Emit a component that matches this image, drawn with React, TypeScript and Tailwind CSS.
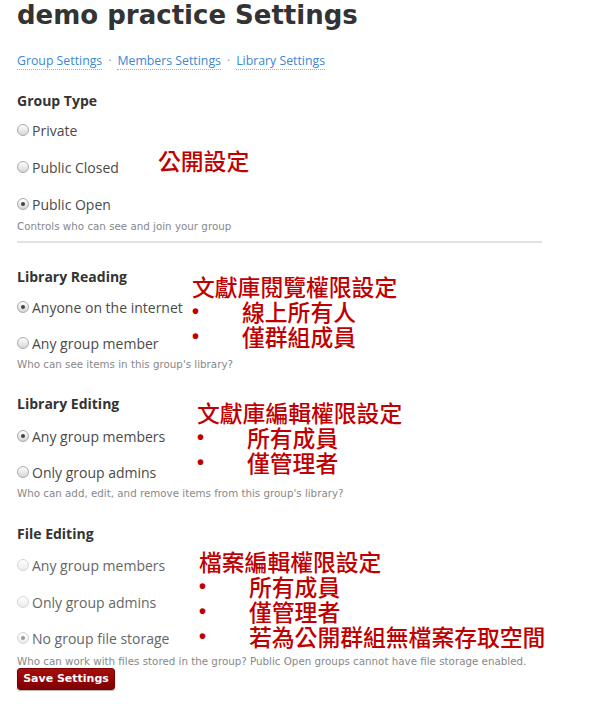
const RED = "text-[#c00000]";

function Radio({ checked = false, disabled = false }: { checked?: boolean; disabled?: boolean }) {
  return (
    <span
      className={`mr-[3px] flex h-[12px] w-[12px] shrink-0 items-center justify-center rounded-full border bg-gradient-to-b ${
        disabled ? "border-[#d4d4d4] from-white to-[#ececec]" : "border-[#a9a9a9] from-white to-[#d6d6d6]"
      }`}
    >
      {checked && (
        <span className={`h-[4px] w-[4px] rounded-full ${disabled ? "bg-[#9a9a9a]" : "bg-[#444]"}`} />
      )}
    </span>
  );
}

function Option({ label, checked, disabled, className = "" }: { label: string; checked?: boolean; disabled?: boolean; className?: string }) {
  return (
    <label className={`flex h-[20px] items-center text-[14px] text-[#4a4a4a] ${className}`}>
      <Radio checked={checked} disabled={disabled} />
      <span>{label}</span>
    </label>
  );
}

function Heading({ children, className = "" }: { children: React.ReactNode; className?: string }) {
  return <h2 className={`flex h-[20px] items-center text-[14px] font-bold text-[#333] ${className}`}>{children}</h2>;
}

// help line sits a little lower than its box centre in the original
function Help({ children, className = "" }: { children: React.ReactNode; className?: string }) {
  return (
    <p className={`flex h-[18px] items-end font-['DejaVu_Sans',sans-serif] text-[10.3px] leading-[14px] text-[#888] ${className}`}>
      {children}
    </p>
  );
}

function Note({ title, items, x, y }: { title: string; items: string[]; x: number; y: number }) {
  return (
    <div
      className={`absolute font-['Noto_Sans_CJK_TC',sans-serif] text-[22.8px] font-medium leading-[25px] ${RED}`}
      style={{ left: x, top: y }}
    >
      <div>{title}</div>
      {items.map((t) => (
        <div key={t} className="flex items-center">
          <span className="w-[50px] font-['Liberation_Sans',sans-serif] text-[20px] font-bold leading-[25px]">•</span>
          <span>{t}</span>
        </div>
      ))}
    </div>
  );
}

export default function App() {
  return (
    <div className="relative min-h-[709px] overflow-hidden bg-white pl-[17px] font-['Open_Sans',sans-serif]">
      <h1 className="mt-[-2px] flex h-[34px] items-center font-['DejaVu_Sans',sans-serif] text-[26px] font-bold text-[#333]">
        demo practice Settings
      </h1>

      <nav className="mt-[19px] flex h-[20px] items-center text-[12.3px] text-[#3a86d4]">
        <a className="border-b border-dotted border-[#aaa] leading-[16px]">Group Settings</a>
        <span className="px-[6px] text-[#999]">·</span>
        <a className="border-b border-dotted border-[#aaa] leading-[16px]">Members Settings</a>
        <span className="px-[6px] text-[#999]">·</span>
        <a className="border-b border-dotted border-[#aaa] leading-[16px]">Library Settings</a>
      </nav>

      <Heading className="mt-[19px]">Group Type</Heading>
      <Option className="mt-[10px]" label="Private" />
      <Option className="mt-[17px]" label="Public Closed" />
      <Option className="mt-[17px]" label="Public Open" checked />
      <Help className="mt-[1px]">Controls who can see and join your group</Help>

      <hr className="mt-[8px] w-[525px] border-t-2 border-[#e2e2e2]" />

      <Heading className="mt-[23px]">Library Reading</Heading>
      <Option className="mt-[11px]" label="Anyone on the internet" checked />
      <Option className="mt-[16px]" label="Any group member" />
      <Help>Who can see items in this group's library?</Help>

      <Heading className="mt-[22px]">Library Editing</Heading>
      <Option className="mt-[13px]" label="Any group members" checked />
      <Option className="mt-[16px]" label="Only group admins" />
      <Help>Who can add, edit, and remove items from this group's library?</Help>

      <Heading className="mt-[23px]">File Editing</Heading>
      <Option className="mt-[12px] text-[#666]" label="Any group members" disabled />
      <Option className="mt-[17px] text-[#666]" label="Only group admins" disabled />
      <Option className="mt-[16px] text-[#666]" label="No group file storage" checked disabled />
      <Help className="mt-[2px]">
        Who can work with files stored in the group? Public Open groups cannot have file storage enabled.
      </Help>

      <button className="flex h-[22px] w-[98px] items-center justify-center rounded-[3px] border border-[#7a0000] bg-gradient-to-b from-[#a80d0d] to-[#800000] font-['DejaVu_Sans',sans-serif] text-[11px] font-bold text-white shadow-[0_1px_1px_rgba(0,0,0,0.3)]">
        Save Settings
      </button>

      <Note title="公開設定" items={[]} x={158} y={148} />
      <Note title="文獻庫閱覽權限設定" items={["線上所有人", "僅群組成員"]} x={192} y={274} />
      <Note title="文獻庫編輯權限設定" items={["所有成員", "僅管理者"]} x={197} y={400} />
      <Note title="檔案編輯權限設定" items={["所有成員", "僅管理者", "若為公開群組無檔案存取空間"]} x={199} y={549} />
    </div>
  );
}
